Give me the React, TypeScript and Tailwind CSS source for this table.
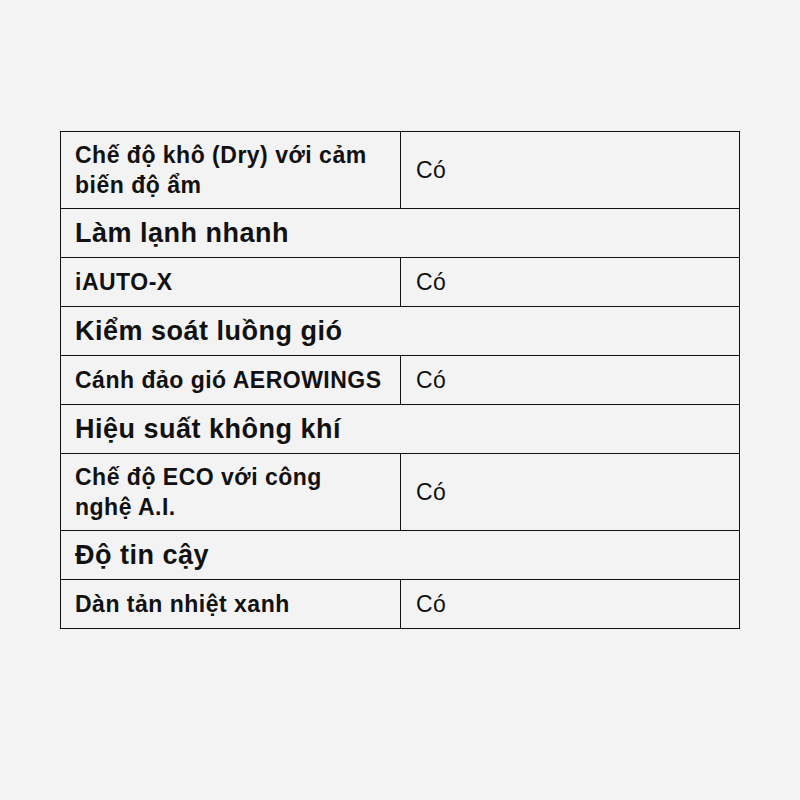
type Row =
  | { kind: 'row'; lines: string[]; value: string }
  | { kind: 'head'; label: string }

const rows: Row[] = [
  { kind: 'row', lines: ['Chế độ khô (Dry) với cảm', 'biến độ ẩm'], value: 'Có' },
  { kind: 'head', label: 'Làm lạnh nhanh' },
  { kind: 'row', lines: ['iAUTO-X'], value: 'Có' },
  { kind: 'head', label: 'Kiểm soát luồng gió' },
  { kind: 'row', lines: ['Cánh đảo gió AEROWINGS'], value: 'Có' },
  { kind: 'head', label: 'Hiệu suất không khí' },
  { kind: 'row', lines: ['Chế độ ECO với công', 'nghệ A.I.'], value: 'Có' },
  { kind: 'head', label: 'Độ tin cậy' },
  { kind: 'row', lines: ['Dàn tản nhiệt xanh'], value: 'Có' },
]

export default function App() {
  return (
    <main className="flex min-h-[800px] w-full flex-col bg-[#f3f3f3] px-[60px] pt-[131px] font-['Liberation_Sans',Arial,sans-serif] text-[#111]">
      <table className="w-[680px] border-collapse">
        <colgroup>
          <col className="w-[340px]" />
          <col />
        </colgroup>
        <tbody>
          {rows.map((r, i) =>
            r.kind === 'head' ? (
              <tr key={i}>
                <td
                  colSpan={2}
                  className="h-[49px] border border-[#111] px-[14px] py-0 align-middle text-[27px] leading-[30px] font-bold tracking-[0.5px]"
                >
                  {r.label}
                </td>
              </tr>
            ) : (
              <tr key={i}>
                <td className="h-[49px] border border-[#111] py-[8px] pr-[10px] pl-[14px] align-middle text-[23px] leading-[30px] font-bold tracking-[0.5px]">
                  {r.lines.map((l, j) => (
                    <span key={j} className="block whitespace-nowrap">
                      {l}
                    </span>
                  ))}
                </td>
                <td className="border border-[#111] px-[15px] py-[8px] align-middle text-[23px] leading-[30px] tracking-[0.3px]">
                  {r.value}
                </td>
              </tr>
            ),
          )}
        </tbody>
      </table>
    </main>
  )
}
